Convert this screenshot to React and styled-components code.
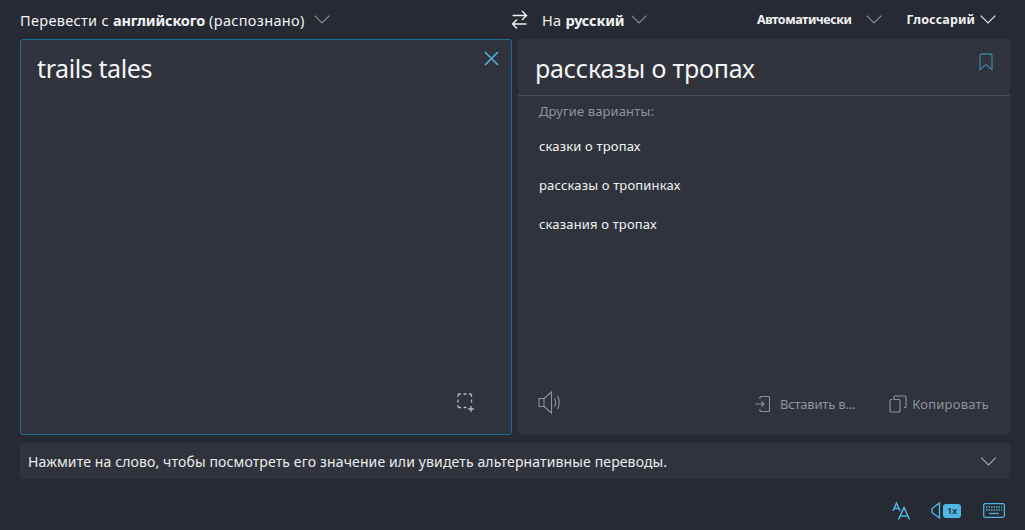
import React from "react";
import styled, { createGlobalStyle } from "styled-components";

const Global = createGlobalStyle`
  html, body { margin: 0; padding: 0; background: #272a32; }
  body { font-family: "Noto Sans", "Open Sans", sans-serif; }
`;

const Page = styled.div`
  width: 1025px;
  height: 530px;
  box-sizing: border-box;
  padding: 0 15px 0 20px;
  display: flex;
  flex-direction: column;
  background: #272a32;
  overflow: hidden;
`;
const TopBar = styled.div`
  height: 39px;
  display: flex;
  align-items: center;
  flex: none;
`;
const LeftLang = styled.div`
  width: 488px;
  display: flex;
  align-items: center;
  gap: 9px;
`;
const LangLabel = styled.span`
  font-size: 14.5px;
  letter-spacing: 0.32px;
  color: #f2f3f4;
  white-space: nowrap;
  b { font-weight: 700; letter-spacing: -0.2px; }
`;
const RightLang = styled.div`
  display: flex;
  align-items: center;
  gap: 7px;
  width: 215px;
`;
const SwapBtn = styled.div`
  display: flex;
  margin: 0 14px 0 3px;
`;
const Options = styled.div`
  display: flex;
  align-items: center;
`;
const OptLabel = styled.span`
  font-size: 12.5px;
  font-weight: 700;
  letter-spacing: ${(p) => p.$ls}px;
  color: #f0f1f3;
  white-space: nowrap;
`;
const OptItem = styled.div`
  display: flex;
  align-items: center;
  gap: ${(p) => p.$gap}px;
  margin-right: ${(p) => p.$mr}px;
`;
const Panels = styled.div`
  display: grid;
  grid-template-columns: 492px 492px;
  column-gap: 6px;
  height: 396px;
  flex: none;
`;
const SourcePanel = styled.div`
  position: relative;
  box-sizing: border-box;
  background: #30333c;
  border: 1px solid #1f6c91;
  border-radius: 3px;
  padding: 10px 16px;
`;
const BigText = styled.div`
  font-size: 25px;
  line-height: 36px;
  letter-spacing: ${(p) => p.$ls}px;
  color: #f4f5f6;
`;
const CloseIcon = styled.div`
  position: absolute;
  top: 11px;
  right: 12px;
  display: flex;
`;
const ScanIcon = styled.div`
  position: absolute;
  right: 36px;
  bottom: 22px;
  display: flex;
`;
const TargetPanel = styled.div`
  position: relative;
  background: #30333c;
  border-radius: 3px;
  display: flex;
  flex-direction: column;
`;
const TargetHead = styled.div`
  height: 57px;
  box-sizing: border-box;
  padding: 11px 17px 0;
  border-bottom: 1px solid #4a4d55;
  flex: none;
`;
const BookmarkIcon = styled.div`
  position: absolute;
  top: 14px;
  right: 16px;
  display: flex;
`;
const Alts = styled.div`
  padding: 6px 21px 0;
  flex: 1;
`;
const AltTitle = styled.div`
  font-size: 13px;
  line-height: 18px;
  letter-spacing: 0.12px;
  color: #8f949c;
  margin-bottom: 17px;
`;
const AltItem = styled.div`
  font-size: 13px;
  line-height: 18px;
  letter-spacing: 0.16px;
  color: #f2f3f4;
  margin-bottom: 21px;
`;
const TargetFoot = styled.div`
  display: flex;
  align-items: center;
  height: 56px;
  padding: 0 21px 9px 20px;
  box-sizing: border-box;
  flex: none;
`;
const Action = styled.div`
  display: flex;
  align-items: center;
  gap: ${(p) => p.$gap}px;
  margin-left: ${(p) => p.$ml};
  margin-top: 3px;
`;
const ActionLabel = styled.span`
  font-size: 13px;
  letter-spacing: ${(p) => p.$ls}px;
  color: #8f949c;
  white-space: nowrap;
`;
const HintBar = styled.div`
  height: 36px;
  margin-top: 8px;
  flex: none;
  background: #30333c;
  border-radius: 3px;
  display: flex;
  align-items: center;
  justify-content: space-between;
  padding: 0 13px 0 8px;
`;
const HintText = styled.span`
  font-size: 14px;
  letter-spacing: 0.13px;
  color: #eceded;
`;
const Footer = styled.div`
  flex: 1;
  display: flex;
  justify-content: flex-end;
  align-items: center;
  padding: 12px 5px 0 0;
`;
const FootIcon = styled.div`
  display: flex;
  align-items: center;
  gap: 2px;
  margin-left: ${(p) => p.$ml}px;
`;
const SpeedBadge = styled.span`
  width: 18px;
  height: 14px;
  border-radius: 3px;
  background: #4fb6e6;
  color: #27333f;
  font-size: 9.5px;
  line-height: 14px;
  font-weight: 600;
  text-align: center;
  letter-spacing: -0.3px;
`;

const Chevron = ({ color = "#8b8f96", w = 16 }) => (
  <svg width={w} height="9" viewBox="0 0 16 9" fill="none">
    <path d="M.7.7 8 8l7.300-7.300" stroke={color} strokeWidth="1.1" />
  </svg>
);

export default function App() {
  return (
    <Page>
      <Global />
      <TopBar>
        <LeftLang>
          <LangLabel>
            Перевести с <b>английского</b> (распознано)
          </LangLabel>
          <Chevron />
        </LeftLang>
        <SwapBtn>
          <svg width="17" height="20" viewBox="0 0 17 20" fill="none" stroke="#f2f3f4" strokeWidth="1.4">
            <path d="M1.500 5.500h14M11 1l4.500 4.500L11 10M15.500 14h-14M6 9.500 1.500 14 6 18.500" />
          </svg>
        </SwapBtn>
        <RightLang>
          <LangLabel>
            На <b>русский</b>
          </LangLabel>
          <Chevron />
        </RightLang>
        <Options>
          <OptItem $gap={14} $mr={25}>
            <OptLabel $ls={-0.45}>Автоматически</OptLabel>
            <Chevron />
          </OptItem>
          <OptItem $gap={5} $mr={0}>
            <OptLabel $ls={0.12}>Глоссарий</OptLabel>
            <Chevron color="#e8e9ea" />
          </OptItem>
        </Options>
      </TopBar>
      <Panels>
        <SourcePanel>
          <BigText $ls={-0.4}>trails tales</BigText>
          <CloseIcon>
            <svg width="15" height="15" viewBox="0 0 15 15" fill="none" stroke="#4fb3e0" strokeWidth="1.6">
              <path d="m1 1 13 13M14 1 1 14" />
            </svg>
          </CloseIcon>
          <ScanIcon>
            <svg width="18" height="19" viewBox="0 0 18 19" fill="none" stroke="#b4b7bb" strokeWidth="1.3">
              <path d="M1 4V2q0-1 1-1h2M6.500 1h3M12 1h1.500q1 0 1 1v2M14.500 6.500v3M1 6.500v3M1 12v1.500q0 1 1 1h2M6.500 14.500h3M14 13v6M11 16h6" />
            </svg>
          </ScanIcon>
        </SourcePanel>
        <TargetPanel>
          <TargetHead>
            <BigText $ls={-0.15}>рассказы о тропах</BigText>
          </TargetHead>
          <BookmarkIcon>
            <svg width="16" height="18" viewBox="0 0 16 18" fill="none" stroke="#3f7f9f" strokeWidth="1.3">
              <path d="M2 16.500V2.500q0-1.500 1.500-1.500h9q1.500 0 1.500 1.500v14l-6-5z" />
            </svg>
          </BookmarkIcon>
          <Alts>
            <AltTitle>Другие варианты:</AltTitle>
            <AltItem>сказки о тропах</AltItem>
            <AltItem>рассказы о тропинках</AltItem>
            <AltItem>сказания о тропах</AltItem>
          </Alts>
          <TargetFoot>
            <svg width="24" height="23" viewBox="0 0 24 23" fill="none" stroke="#8f949c" strokeWidth="1.1">
              <path d="M1 7.500h5v8H1zM6 7.500 13.500 1v21L6 15.500M16.500 7.500q2.500 4 0 8M19.500 5q3.500 6.500 0 13" />
            </svg>
            <Action $gap={9} $ml="auto">
              <svg width="16" height="18" viewBox="0 0 16 18" fill="none" stroke="#8f949c" strokeWidth="1.1">
                <path d="M5 4V2.500q0-1 1-1h7.500q1 0 1 1v13q0 1-1 1H6q-1 0-1-1V14M.5 9h8.500M6.500 6.500 9 9l-2.500 2.500" />
              </svg>
              <ActionLabel $ls={-0.2}>Вставить в...</ActionLabel>
            </Action>
            <Action $gap={5} $ml="34px">
              <svg width="18" height="18" viewBox="0 0 18 18" fill="none" stroke="#8f949c" strokeWidth="1.1">
                <path d="M3.500 4.500H2q-1 0-1 1V16q0 1 1 1h8q1 0 1-1v-2M5 4.500V2q0-1 1-1h10q1 0 1 1v9.500q0 1-1 1h-1M5 4.500h5q1 0 1 1v8.500" />
              </svg>
              <ActionLabel $ls={0.2}>Копировать</ActionLabel>
            </Action>
          </TargetFoot>
        </TargetPanel>
      </Panels>
      <HintBar>
        <HintText>Нажмите на слово, чтобы посмотреть его значение или увидеть альтернативные переводы.</HintText>
        <Chevron w={17} color="#a5a8ad" />
      </HintBar>
      <Footer>
        <FootIcon $ml={0}>
          <svg width="20" height="19" viewBox="0 0 20 19" fill="none" stroke="#4fb3e0" strokeWidth="1.5">
            <path d="m1 10 3.500-8L8 10M2.200 7.500h4.600M6.500 18.500 12 6.500l5.500 12M8.200 15h7.600" />
          </svg>
        </FootIcon>
        <FootIcon $ml={18}>
          <svg width="11" height="17" viewBox="0 0 11 17" fill="none" stroke="#4fb3e0" strokeWidth="1.4">
            <path d="M9.500 1v15L2 10.500V6.500z" />
          </svg>
          <SpeedBadge>1x</SpeedBadge>
        </FootIcon>
        <FootIcon $ml={22}>
          <svg width="22" height="15" viewBox="0 0 22 15" fill="none" stroke="#4fb3e0" strokeWidth="1.3">
            <rect x=".7" y=".7" width="20.600" height="13.600" rx="1.500" />
            <path d="M3 4h16M3 7h16" strokeDasharray="1.500 1" />
            <path d="M6 10.500h10" />
          </svg>
        </FootIcon>
      </Footer>
    </Page>
  );
}
